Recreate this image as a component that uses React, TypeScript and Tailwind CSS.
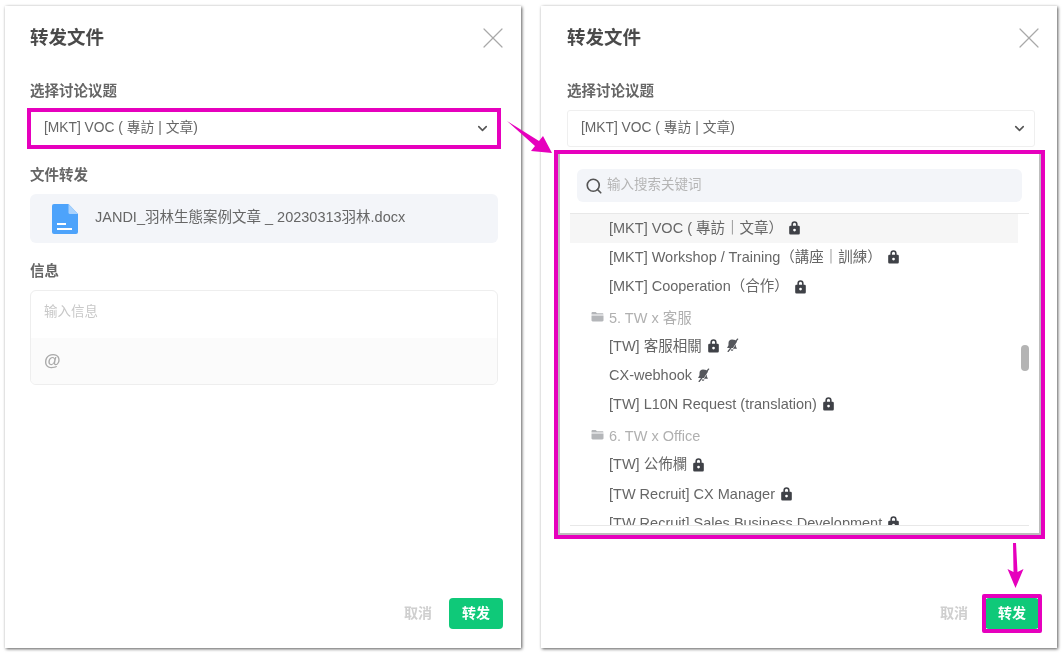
import { ChevronDown, Search, X } from "lucide-react";

const font = { fontFamily: '"Liberation Sans","Noto Sans CJK SC",sans-serif' };

function Lock() {
  return (
    <svg width="15" height="15" viewBox="0 0 24 24" className="shrink-0 -translate-y-[1px]">
      <path fill="#3f4147" d="M17 9V7A5 5 0 0 0 7 7v2H5.500A2 2 0 0 0 3.500 11V21a2 2 0 0 0 2 2h13a2 2 0 0 0 2-2V11a2 2 0 0 0-2-2ZM9.500 7a2.500 2.500 0 0 1 5 0v2h-5Z" />
      <circle cx="12" cy="16" r="2.200" fill="#fff" />
    </svg>
  );
}

function BellOff() {
  return (
    <svg width="14" height="14" viewBox="0 0 24 24" className="shrink-0 -translate-y-[1px]">
      <path fill="#55575c" d="M12 2.500c-3.500 0-6 2.500-6 6v4L3.500 17h10l7-10.500C19.200 4 16 2.500 12 2.500ZM19 10.500l-5.500 8H20.500L18.500 14ZM9.500 19.500c.3 1.500 1.200 2.500 2.500 2.500s2.200-1 2.500-2.500Z" />
      <path stroke="#55575c" strokeWidth="2.400" strokeLinecap="round" d="M21.500 2 5.500 23" />
    </svg>
  );
}

function Folder() {
  return (
    <svg width="13" height="12" viewBox="0 0 13 12" className="shrink-0 -translate-y-[2px]">
      <path fill="#b4b6b9" d="M.5 2.200C.5 1.500 1 1 1.700 1h3l1.300 1.300h5.300c.7 0 1.200.5 1.200 1.200H.5ZM.5 4.500h12v4.800c0 .7-.5 1.200-1.200 1.200H1.700c-.7 0-1.200-.5-1.200-1.200Z" />
    </svg>
  );
}

function Row({ name, icons = "", active = false }: { name: string; icons?: string; active?: boolean }) {
  return (
    <div className={`flex h-[29.250px] w-[448px] shrink-0 items-center gap-[4px] pl-[39px] text-[14.500px] text-[#666] ${active ? "bg-[#f6f6f6]" : ""}`}>
      <span className="whitespace-nowrap">{name}</span>
      {icons.includes("l") && <Lock />}
      {icons.includes("b") && <BellOff />}
    </div>
  );
}

function Group({ name, extra = false }: { name: string; extra?: boolean }) {
  return (
    <div className={`flex h-[30px] shrink-0 items-center gap-[5px] pl-[21px] pt-[5px] text-[14.500px] text-[#b0b0b0] ${extra ? "mb-[1px]" : ""}`}>
      <Folder />
      <span>{name}</span>
    </div>
  );
}

function Highlight({ className }: { className: string }) {
  return <div className={`pointer-events-none absolute border-[4px] border-[#e600bd] ${className}`} />;
}

function Panel({ arrow, open }: { arrow?: boolean; open?: boolean }) {
  return (
    <section className={`relative flex h-[642px] w-[516px] shrink-0 flex-col bg-white pr-[25px] shadow-[1px_1px_3px_rgba(0,0,0,0.65)] ${open ? "pl-[26px]" : "pl-[25px]"}`}>
      <header className="flex h-[61px] items-center justify-between pt-[2px]">
        <h1 className="text-[18.500px] font-bold text-[#4a4a4a]">转发文件</h1>
        <X size={36} strokeWidth={0.8} className="mr-[-15px] text-[#a9a9a9]" />
      </header>
      <p className="mt-[14px] text-[14.500px] leading-[20px] font-bold text-[#666]">选择讨论议题</p>
      <div className="relative mt-[9px] flex h-[37px] w-[468px] items-center justify-between rounded-[3px] border border-[#efefef] pl-[13px] pr-[7px] text-[13.800px] text-[#666]">
        <span>[MKT] VOC ( 專訪 | 文章)</span>
        <ChevronDown size={15} strokeWidth={2.500} className="text-[#555]" />
        {arrow && <Highlight className="-inset-x-[4px] -inset-y-[3px]" />}
      </div>
      <p className="mt-[18px] text-[14.500px] leading-[20px] font-bold text-[#666]">文件转发</p>
      <div className="mt-[9px] flex h-[49px] w-[468px] items-center gap-[16px] rounded-[6px] bg-[#f3f5f9] pl-[21px] text-[14.500px] text-[#666]">
        <svg width="28" height="32" viewBox="0 0 28 32" className="shrink-0">
          <path fill="#4da3fb" d="M3 1h14.500L27 11v18a2 2 0 0 1-2 2H3a2 2 0 0 1-2-2V3a2 2 0 0 1 2-2Z" />
          <path fill="#a9d2fd" d="M17.500 1 27 11h-8a1.500 1.500 0 0 1-1.500-1.500Z" />
          <rect x="6" y="20" width="9" height="2" fill="#fff" />
          <rect x="6" y="25" width="15" height="2" fill="#fff" />
        </svg>
        <span className="-translate-y-[1px] whitespace-nowrap">JANDI_羽林生態案例文章 _ 20230313羽林.docx</span>
      </div>
      <p className="mt-[18px] text-[14.500px] leading-[20px] font-bold text-[#666]">信息</p>
      <div className="mt-[9px] h-[95px] w-[468px] overflow-hidden rounded-[6px] border border-[#eeeeee]">
        <div className="flex h-[47px] items-center pb-[4px] pl-[13px] text-[13.500px] text-[#c8c8c8]">输入信息</div>
        <div className="flex h-[46px] items-center bg-[#fbfbfb] pl-[13px] text-[17px] font-bold text-[#aaa]">@</div>
      </div>
      <footer className="mr-[-7px] mt-auto mb-[19px] flex items-center justify-end gap-[17px]">
        <span className="text-[14px] font-bold text-[#cfcfcf]">取消</span>
        <div className="relative">
          <button className="h-[31px] w-[54px] rounded-[4px] bg-[#0fc979] text-[14px] font-bold text-white">转发</button>
          {open && <Highlight className="-inset-x-[3px] -inset-y-[4px] rounded-[2px]" />}
        </div>
      </footer>
      {open && (
        <div className="absolute left-[13px] top-[144px] flex h-[389px] w-[491px] flex-col border-[4px] border-[#e600bd] bg-white">
          <div className="flex h-full flex-col border-x-2 border-b-2 border-[#bdbdbd] pt-[15px]">
            <div className="mx-[17px] flex h-[33px] shrink-0 items-center gap-[4px] rounded-[6px] bg-[#f3f5f9] pl-[8px] text-[13.500px] text-[#b5b5b5]">
              <Search size={18} strokeWidth={2.200} className="text-[#555]" />
              <span>输入搜索关键词</span>
            </div>
            <div className="relative mx-[10px] mt-[11px] flex h-[313px] flex-col overflow-hidden border-y border-[#e8e8e8]">
              <Row name="[MKT] VOC ( 專訪｜文章）" icons="l" active />
              <Row name="[MKT] Workshop / Training（講座｜訓練）" icons="l" />
              <Row name="[MKT] Cooperation（合作）" icons="l" />
              <Group name="5. TW x 客服" />
              <Row name="[TW] 客服相關" icons="lb" />
              <Row name="CX-webhook" icons="b" />
              <Row name="[TW] L10N Request (translation)" icons="l" />
              <Group name="6. TW x Office" extra />
              <Row name="[TW] 公佈欄" icons="l" />
              <Row name="[TW Recruit] CX Manager" icons="l" />
              <Row name="[TW Recruit] Sales Business Development" icons="l" />
              <div className="absolute right-0 top-[131px] h-[26px] w-[8px] rounded-full bg-[#b4b4b4]" />
            </div>
          </div>
        </div>
      )}
    </section>
  );
}

export default function App() {
  return (
    <main style={font} className="relative flex h-[653px] w-[1063px] gap-[20px] overflow-hidden bg-white pl-[5px] pt-[6px] blur-[0.5px]">
      <Panel arrow />
      <Panel open />
      <svg width="1063" height="653" className="pointer-events-none absolute left-0 top-0">
        <path fill="#e600bd" d="M507 121 L539 141 L543 136 L552 153 L531 151 L535 146 Z" />
        <path fill="#e600bd" d="M1013 543h3l1.500 29 6-3 -8 19 -8-19 6 3Z" />
      </svg>
    </main>
  );
}
